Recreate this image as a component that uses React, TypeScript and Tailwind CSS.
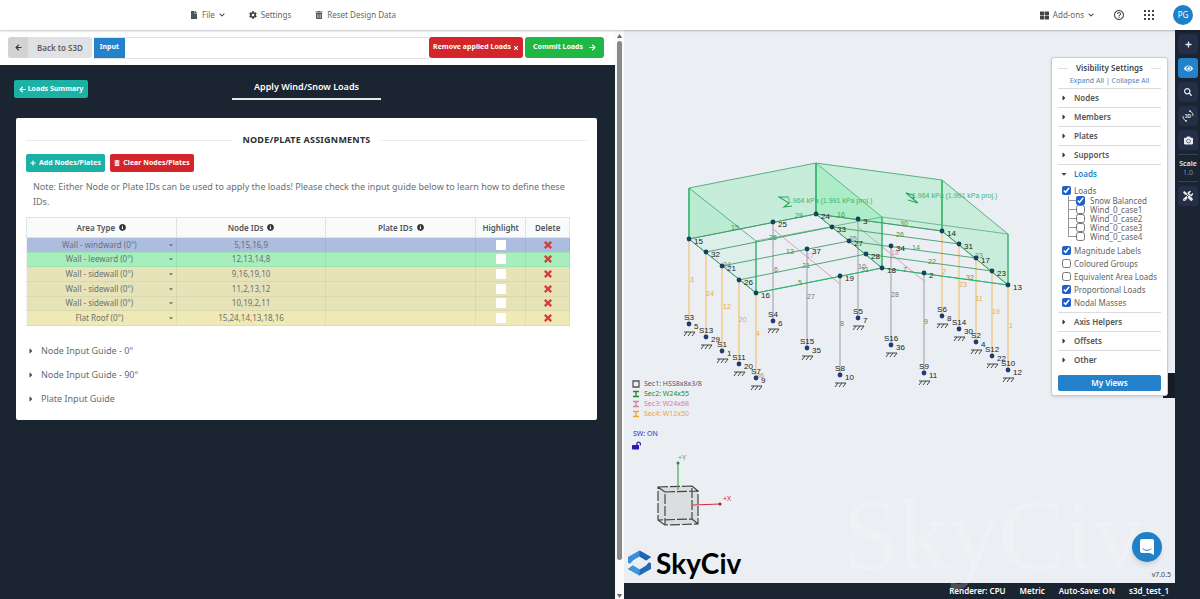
import { useState } from 'react';
import {
  FaArrowLeft, FaArrowRight, FaCamera, FaCaretDown, FaCaretRight, FaChevronDown, FaCog, FaEye, FaFile,
  FaInfoCircle, FaLockOpen, FaPlus, FaSearch, FaThLarge, FaTimes, FaTools, FaTrashAlt,
} from 'react-icons/fa';
import { MdHelpOutline } from 'react-icons/md';

const AREA_TYPES = ['Wall - windward (0°)', 'Wall - leeward (0°)', 'Wall - sidewall (0°)', 'Flat Roof (0°)'];

const ROWS = [
  { type: AREA_TYPES[0], nodes: '5,15,16,9', color: 'bg-[#adbde0]' },
  { type: AREA_TYPES[1], nodes: '12,13,14,8', color: 'bg-[#a6efbc]' },
  { type: AREA_TYPES[2], nodes: '9,16,19,10', color: 'bg-[#e7e3b9]' },
  { type: AREA_TYPES[2], nodes: '11,2,13,12', color: 'bg-[#e7e3b9]' },
  { type: AREA_TYPES[2], nodes: '10,19,2,11', color: 'bg-[#e7e3b9]' },
  { type: AREA_TYPES[3], nodes: '15,24,14,13,18,16', color: 'bg-[#efeab5]' },
];

const GUIDES = ['Node Input Guide - 0°', 'Node Input Guide - 90°', 'Plate Input Guide'];
const LOAD_CASES = ['Snow Balanced', 'Wind_0_case1', 'Wind_0_case2', 'Wind_0_case3', 'Wind_0_case4'];
const LOAD_OPTIONS = ['Magnitude Labels', 'Coloured Groups', 'Equivalent Area Loads', 'Proportional Loads', 'Nodal Masses'];

// roof nodes: [label, x, y]
const NODES: [string, number, number][] = [
  ['15', 689, 239], ['32', 706, 252], ['21', 722, 266], ['26', 739, 280], ['16', 756, 293],
  ['25', 773, 222], ['24', 816, 214], ['33', 832, 227], ['27', 849, 241], ['28', 866, 254], ['18', 882, 268],
  ['37', 807, 249], ['19', 840, 276], ['3', 858, 219], ['34', 891, 246], ['2', 924, 273],
  ['14', 942, 231], ['31', 959, 244], ['17', 976, 258], ['23', 992, 271], ['13', 1008, 285],
];

// supports: [support, node, x, y]
const SUPPORTS: [string, string, number, number][] = [
  ['S3', '5', 689, 324], ['S13', '29', 706, 337], ['S1', '1', 722, 351], ['S11', '20', 739, 364], ['S7', '9', 756, 378],
  ['S4', '6', 773, 321], ['S15', '35', 807, 348], ['S8', '10', 840, 375], ['S5', '7', 858, 318], ['S16', '36', 891, 345],
  ['S9', '11', 924, 373], ['S6', '8', 942, 316], ['S14', '30', 959, 329], ['S2', '4', 976, 342], ['S12', '22', 992, 356], ['S10', '12', 1008, 370],
];

const BEAMS = [
  'M689 239L816 214L942 231', 'M706 252L832 227L959 244', 'M722 266L849 241L976 258',
  'M739 280L866 254L992 271', 'M756 293L882 268L1008 285', 'M689 239L756 293', 'M816 214L882 268', 'M942 231L1008 285',
];

const LOAD_FACES: [string, number][] = [
  ['M689 188L816 163V214L689 239Z', 0.24], ['M689 188L756 241V293L689 239Z', 0.08], ['M816 163L882 217V268L816 214Z', 0.22],
  ['M816 163L942 180V231L816 214Z', 0.22], ['M942 180L1008 234V285L942 231Z', 0.22],
];

const MEMBER_LABELS: [string, number, number, string][] = [
  ['15', 735, 230, '#3f9a4c'], ['25', 773, 240, '#3f9a4c'], ['29', 799, 218, '#3f9a4c'], ['16', 841, 217, '#3f9a4c'],
  ['30', 904, 226, '#3f9a4c'], ['26', 900, 237, '#3f9a4c'], ['14', 916, 250, '#3f9a4c'], ['22', 932, 264, '#3f9a4c'],
  ['32', 970, 280, '#3f9a4c'], ['13', 790, 254, '#3f9a4c'], ['21', 806, 268, '#3f9a4c'], ['5', 800, 285, '#3f9a4c'],
  ['34', 727, 267, '#7c8a84'], ['35', 853, 241, '#7c8a84'], ['33', 979, 258, '#7c8a84'], ['31', 865, 272, '#3f9a4c'],
  ['10', 862, 269, '#777'], ['7', 905, 272, '#777'], ['6', 776, 272, '#777'], ['27', 811, 299, '#777'], ['28', 895, 297, '#777'],
  ['8', 842, 326, '#777'], ['9', 926, 324, '#777'], ['36', 760, 378, '#999'], ['17', 810, 258, '#cf93a8'], ['18', 895, 255, '#cf93a8'],
  ['3', 692, 282, '#e9a93f'], ['24', 710, 296, '#e9a93f'], ['12', 727, 309, '#e9a93f'], ['20', 743, 322, '#e9a93f'], ['4', 758, 336, '#e9a93f'],
  ['2', 944, 274, '#e9a93f'], ['23', 963, 287, '#e9a93f'], ['11', 979, 301, '#e9a93f'], ['19', 996, 314, '#e9a93f'], ['1', 1011, 328, '#e9a93f'],
];

const SECTIONS = [
  { label: 'Sec1: HSS8x8x3/8', color: 'text-[#555]', box: true },
  { label: 'Sec2: W24x55', color: 'text-[#238a2c]', box: false },
  { label: 'Sec3: W24x68', color: 'text-[#d37f98]', box: false },
  { label: 'Sec4: W12x50', color: 'text-[#eda52f]', box: false },
];

function TopBar() {
  return (
    <header className="relative z-20 flex h-[30px] shrink-0 items-center justify-between bg-white pr-[7px] pl-[190px] text-[8px] text-[#666] shadow-[0_1px_2px_rgba(0,0,0,0.25)]">
      <nav className="flex items-center gap-6">
        <button className="flex items-center gap-1"><FaFile className="h-2 w-2 text-[#4d5656]" />File<FaChevronDown className="h-[6px] w-[6px] text-[#444]" /></button>
        <button className="flex items-center gap-1"><FaCog className="h-2 w-2 text-[#444]" />Settings</button>
        <button className="flex items-center gap-1"><FaTrashAlt className="h-2 w-2 text-[#555]" />Reset Design Data</button>
      </nav>
      <div className="flex items-center gap-[19px]">
        <button className="flex items-center gap-1"><FaThLarge className="h-[9px] w-[9px] text-[#444]" />Add-ons<FaChevronDown className="h-[6px] w-[6px] text-[#444]" /></button>
        <button aria-label="Help"><MdHelpOutline className="h-3 w-3 text-[#444]" /></button>
        <button aria-label="Apps">
          <svg viewBox="0 0 10 10" className="h-[10px] w-[10px] fill-[#444]">
            {[0, 4, 8].map((y) => [0, 4, 8].map((x) => <rect key={`${x}-${y}`} x={x} y={y} width="2" height="2" />))}
          </svg>
        </button>
        <button className="h-5 w-5 rounded-full bg-[#1f80c8] text-[8px] text-white">PG</button>
      </div>
    </header>
  );
}

function Toolbar() {
  return (
    <div className="flex h-[35px] shrink-0 items-center bg-white pr-[11px] pl-2 text-[7px] font-bold whitespace-nowrap">
      <button className="flex h-[21px] overflow-hidden rounded-[3px] bg-[#e0e1e2] text-[8px] font-semibold text-[#5c5c5c]">
        <span className="flex h-full w-5 items-center justify-center bg-[#d2d3d4]"><FaArrowLeft className="h-[7px] w-[7px] text-[#333]" /></span>
        <span className="flex h-full w-16 items-center justify-center">Back to S3D</span>
      </button>
      <div className="ml-[2px] flex h-[22px] flex-1 border-y border-[#e0e0e0]">
        <button className="h-full w-[31px] bg-[#2382cb] text-white">Input</button>
      </div>
      <button className="flex h-[21px] w-[94px] items-center justify-center gap-[2px] rounded-[3px] bg-[#d4252a] text-white">Remove applied Loads <FaTimes className="h-[6px] w-[6px]" /></button>
      <button className="ml-[2px] flex h-[21px] w-[79px] items-center justify-center gap-[6px] rounded-[3px] bg-[#20b844] text-white">Commit Loads <FaArrowRight className="h-[7px] w-[7px]" /></button>
    </div>
  );
}

function AssignmentTable() {
  return (
    <table className="mt-2 h-[109px] w-[97%] table-fixed border-collapse border border-[#dfe4e4] text-center text-[8px] text-[#6a7173]">
      <thead className="bg-[#f9fbfb] text-[#4f5557]">
        <tr className="h-5">
          {['Area Type', 'Node IDs', 'Plate IDs'].map((h) => (
            <th key={h} className="border border-[#dfe4e4] p-0 font-semibold leading-3">
              <span className="inline-flex items-center gap-1">{h}<FaInfoCircle className="h-[7px] w-[7px] text-[#333]" /></span>
            </th>
          ))}
          <th className="w-[50px] border border-[#dfe4e4] p-0 font-semibold leading-3">Highlight</th>
          <th className="w-11 border border-[#dfe4e4] p-0 font-semibold leading-3">Delete</th>
        </tr>
      </thead>
      <tbody>
        {ROWS.map((row, i) => (
          <tr key={i} className={row.color}>
            <td className="border border-black/5 p-0">
              <div className="grid items-center">
                <select aria-label={`Area type ${i + 1}`} defaultValue={row.type} className="col-start-1 row-start-1 h-3 w-full appearance-none bg-transparent pr-1 text-center [text-align-last:center] leading-3">
                  {AREA_TYPES.map((t) => <option key={t}>{t}</option>)}
                </select>
                <FaCaretDown className="pointer-events-none col-start-1 row-start-1 mr-[2px] h-[6px] w-[6px] justify-self-end" />
              </div>
            </td>
            <td className="border border-black/5 p-0"><input aria-label={`Node IDs ${i + 1}`} defaultValue={row.nodes} className="block h-3 w-full bg-transparent text-center" /></td>
            <td className="border border-black/5 p-0"><input aria-label={`Plate IDs ${i + 1}`} className="block h-3 w-full bg-transparent text-center" /></td>
            <td className="border border-black/5 p-0"><input type="checkbox" aria-label={`Highlight ${i + 1}`} className="mx-auto block h-[10px] w-[10px] appearance-none rounded-[1px] bg-white checked:bg-[#2382cb]" /></td>
            <td className="border border-black/5 p-0"><button aria-label={`Delete ${i + 1}`} className="mx-auto block"><FaTimes className="h-[10px] w-[10px] stroke-[#cf3b36] stroke-[40] text-[#cf3b36]" /></button></td>
          </tr>
        ))}
      </tbody>
    </table>
  );
}

function LoadsPane() {
  return (
    <main className="flex-1 bg-[#1b2531] pt-[14px] pr-[18px] pl-4">
      <div className="relative flex justify-center">
        <button className="absolute top-[1px] -left-[2px] flex h-[18px] w-[74px] items-center justify-center gap-[2px] rounded-[2px] bg-[#1cb1a5] text-[7px] font-bold text-white"><FaArrowLeft className="h-[7px] w-[7px]" />Loads Summary</button>
        <h1 className="h-[21px] w-[149px] border-b-2 border-white/90 text-center text-[9px] leading-4 font-semibold text-white">Apply Wind/Snow Loads</h1>
      </div>
      <section className="mt-[18px] rounded-[2px] bg-white px-[10px] pt-[14px] pb-[9px]">
        <div className="flex items-center gap-[10px]">
          <hr className="flex-1 border-[#e9ebeb]" />
          <h2 className="text-[9px] leading-4 font-bold tracking-wide text-[#2c2f31]">NODE/PLATE ASSIGNMENTS</h2>
          <hr className="flex-1 border-[#e9ebeb]" />
        </div>
        <div className="mt-[6px] flex gap-[5px] text-[7px] font-bold text-white">
          <button className="flex h-[18px] w-[79px] items-center justify-center gap-[3px] rounded-[2px] bg-[#1cb1a5]"><FaPlus className="h-[6px] w-[6px]" />Add Nodes/Plates</button>
          <button className="flex h-[18px] w-[84px] items-center justify-center gap-[3px] rounded-[2px] bg-[#d4252a]"><FaTrashAlt className="h-[6px] w-[6px]" />Clear Nodes/Plates</button>
        </div>
        <p className="mt-[7px] pr-[10px] pl-[7px] text-[9px] leading-[15px] text-[#66707a]">
          Note: Either Node or Plate IDs can be used to apply the loads! Please check the input guide below to learn how to define these IDs.
        </p>
        <AssignmentTable />
        <div className="mt-[13px] text-[9px] text-[#666c70]">
          {GUIDES.map((g) => (
            <button key={g} className="flex h-6 w-full items-center gap-[6px] pl-[1px]"><FaCaretRight className="h-2 w-2 text-[#444]" />{g}</button>
          ))}
        </div>
      </section>
    </main>
  );
}

function ScrollTrack() {
  return (
    <div className="flex w-[9px] shrink-0 flex-col items-center bg-[#fafafa] pt-1 pb-[1px]">
      <svg viewBox="0 0 5 4" className="h-1 w-[5px] fill-[#666]"><path d="M0 4L2.500 0L5 4Z" /></svg>
      <div className="mt-[3px] w-[5px] flex-1 rounded-full bg-[#8a8a8a]" />
      <svg viewBox="0 0 5 4" className="mt-[34px] h-1 w-[5px] fill-[#666]"><path d="M0 0L2.500 4L5 0Z" /></svg>
    </div>
  );
}

function Model() {
  return (
    <svg viewBox="624 30 551 553" className="h-full w-full" style={{ fontFamily: '"Liberation Sans", Arial, sans-serif' }} fontSize="8">
      {SUPPORTS.map(([s, , x, y]) => {
        const top = NODES.find((n) => n[1] === x);
        const orange = x < 760 || x > 930;
        return <path key={s} d={`M${x} ${top ? top[2] : y}V${y}`} stroke={orange ? '#f2c67c' : '#999da0'} strokeWidth={orange ? 1.3 : 1} />;
      })}
      <path d="M773 229L840 284M858 227L924 281" stroke="#cfa3b2" strokeWidth="1" />
      {LOAD_FACES.map(([d, o]) => <path key={d} d={d} fill="#4de78a" fillOpacity={o} stroke="#4aa877" strokeWidth="0.9" />)}
      <path d="M756 241L882 217L1008 234" fill="none" stroke="#62b389" strokeWidth="0.9" />
      <path d="M689 188V239M756 241V293M816 163V214M882 217V268M942 180V231M1008 234V285" stroke="#30bd6b" strokeWidth="1.100" />
      {BEAMS.map((d) => <path key={d} d={d} fill="none" stroke="#419c67" strokeWidth="0.9" />)}
      <path d="M756 293L882 268L1008 285" fill="none" stroke="#25b873" strokeWidth="0.9" />
      <g fill="none" stroke="#25a85a" strokeWidth="1.100">
        <path d="M789 197H779L789 203L784 207L792 206" />
        <path d="M914 200L913 195L906 193L918 203L908 200" />
      </g>
      <g fill="#3fb56b" fontSize="7">
        <text x="787" y="203">1.964 kPa (1.991 kPa proj.)</text>
        <text x="912" y="198">1.964 kPa (1.991 kPa proj.)</text>
      </g>
      {MEMBER_LABELS.map(([t, x, y, fill], i) => <text key={i} x={x} y={y} fill={fill} textAnchor="middle" fontSize="7">{t}</text>)}
      {NODES.map(([t, x, y]) => (
        <g key={t}>
          <circle cx={x} cy={y} r="2.400" fill="#17415c" />
          <text x={x + 5} y={y + 5} fill="#222">{t}</text>
        </g>
      ))}
      {SUPPORTS.map(([s, t, x, y]) => (
        <g key={s}>
          <circle cx={x} cy={y} r="2.400" fill="#223a78" />
          <text x={x} y={y - 4} fill="#222" textAnchor="middle">{s}</text>
          <text x={x + 5} y={y + 5} fill="#222">{t}</text>
          <path d={`M${x - 5} ${y + 8}H${x + 6}M${x - 2} ${y + 8}L${x - 5} ${y + 12}M${x + 2} ${y + 8}L${x - 1} ${y + 12}M${x + 6} ${y + 8}L${x + 3} ${y + 12}`} stroke="#333" strokeWidth="0.9" />
        </g>
      ))}
    </svg>
  );
}

function CanvasCorner() {
  return (
    <div className="absolute bottom-[2px] left-1">
      <ul className="pl-1 text-[7px] leading-[10px]">
        {SECTIONS.map((s) => (
          <li key={s.label} className={`flex h-[10px] items-center gap-1 ${s.color}`}>
            <svg viewBox="0 0 8 8" className="h-2 w-2 fill-none stroke-current stroke-[1.3]"><path d={s.box ? 'M1 1H7V7H1Z' : 'M1 1.500H7M1 6.500H7M4 1.500V6.500'} /></svg>
            {s.label}
          </li>
        ))}
      </ul>
      <div className="mt-[10px] pl-[5px] text-[7px] leading-[10px] text-[#3a26c0]">SW: ON</div>
      <FaLockOpen className="mt-[2px] ml-1 h-[9px] w-[9px] text-[#2d16b8]" />
      <svg viewBox="650 450 90 78" className="ml-[22px] h-[78px] w-[90px]" fontSize="7">
        <path d="M658 487L692 486V519L658 520Z M665 492L698 491V524L665 525Z" fill="#d4d6d8" fillOpacity="0.7" />
        <path d="M658 487L692 486V519L658 520Z M665 492L698 491V524L665 525Z M658 487L665 492M692 486L698 491M692 519L698 524M658 520L665 525" fill="none" stroke="#444" strokeWidth="1.200" strokeDasharray="10 2" />
        <path d="M678 490V463" stroke="#4ca64c" strokeWidth="1.200" />
        <circle cx="678" cy="463" r="1.500" fill="#3f7a3f" />
        <path d="M693 505L720 504" stroke="#d42a3a" strokeWidth="1.200" />
        <circle cx="720" cy="504" r="1.500" fill="#8a2430" />
        <text x="678" y="460" fill="#4ca64c" className="font-['Noto_Sans',sans-serif]">+Y</text>
        <text x="723" y="501" fill="#d42a3a" className="font-['Noto_Sans',sans-serif]">+X</text>
      </svg>
      <div className="mt-[17px] flex h-9 items-center gap-[5px]">
        <svg viewBox="0 0 66 74" className="h-[26px] w-[23px]">
          <path d="M0 36V20L33 1L66 20L52 30L33 18L15 29L6 39Z" fill="#3a8fdb" />
          <path d="M33 1L66 20L52 30L33 18Z" fill="#2264b4" />
          <path d="M66 38V54L33 73L0 54L14 44L33 56L51 45L60 35Z" fill="#2468b8" />
          <path d="M33 73L0 54L14 44L33 56Z" fill="#3f97e0" />
        </svg>
        <span className="font-[Lato,sans-serif] text-[28px] leading-9 font-bold text-black">SkyCiv</span>
      </div>
    </div>
  );
}

function SettingsRow({ label, open }: { label: string; open?: boolean }) {
  return (
    <button className={`flex h-[19px] w-full items-center gap-[7px] border-t border-[#dcdcdc] pl-[3px] text-[8px] font-semibold ${open ? 'text-[#2382cb]' : 'text-[#555]'}`}>
      {open ? <FaCaretDown className="h-2 w-[6px] text-[#444]" /> : <FaCaretRight className="h-2 w-[6px] text-[#333]" />}
      {label}
    </button>
  );
}

function VisibilityPanel() {
  const [checked, setChecked] = useState<string[]>(['Loads', 'Snow Balanced', 'Magnitude Labels', 'Proportional Loads', 'Nodal Masses']);
  const box = (name: string) => (
    <input type="checkbox" className="h-[9px] w-[9px] shrink-0 accent-[#1f5fc9]" checked={checked.includes(name)}
      onChange={() => setChecked(checked.includes(name) ? checked.filter((c) => c !== name) : [...checked, name])} />
  );

  return (
    <aside className="absolute top-[27px] right-[7px] w-[117px] rounded-[3px] border border-[#ccc] bg-white px-[6px] pt-[3px] pb-1 text-[8px] text-[#666] shadow">
      <div className="flex items-center gap-2">
        <hr className="flex-1 border-[#e0e0e0]" />
        <h2 className="text-[8px] leading-[14px] font-semibold text-[#444]">Visibility Settings</h2>
        <hr className="flex-1 border-[#e0e0e0]" />
      </div>
      <div className="pb-[2px] text-center text-[7px] leading-[11px] text-[#3f86bd]"><a href="#expand">Expand All</a> | <a href="#collapse">Collapse All</a></div>
      {['Nodes', 'Members', 'Plates', 'Supports'].map((l) => <SettingsRow key={l} label={l} />)}
      <SettingsRow label="Loads" open />
      <div className="pt-[2px] pb-[3px] pl-[4px]">
        <label className="flex h-[11px] items-center gap-[3px]">{box('Loads')}Loads</label>
        <ul className="mb-[3px] pl-[6px]">
          {LOAD_CASES.map((c, i) => (
            <li key={c} className="flex h-[9px]">
              <span className={`w-px bg-[#999] ${i === 4 ? 'h-[5px]' : 'h-full'}`} />
              <span className="mt-1 h-px w-[7px] bg-[#999]" />
              <label className="flex items-center gap-[5px] leading-[9px]">{box(c)}{c}</label>
            </li>
          ))}
        </ul>
        {LOAD_OPTIONS.map((o) => <label key={o} className="flex h-[13px] items-center gap-[3px] whitespace-nowrap">{box(o)}{o}</label>)}
      </div>
      {['Axis Helpers', 'Offsets', 'Other'].map((l) => <SettingsRow key={l} label={l} />)}
      <button className="mt-[6px] block h-4 w-full rounded-[2px] bg-[#2382cb] text-[8px] font-semibold text-white">My Views</button>
    </aside>
  );
}

function Viewport() {
  return (
    <section className="relative flex min-w-0 flex-1 flex-col">
      <div className="relative min-h-0 flex-1 bg-[#ebeff3]">
        <Model />
        <CanvasCorner />
        <span className="absolute right-1 bottom-[3px] text-[7px] leading-[10px] text-[#444]">v7.0.5</span>
        <div className="absolute top-[343px] right-0 h-[25px] w-3 bg-[#151c26]" />
      </div>
      <footer className="flex h-4 items-center justify-end gap-[14px] bg-[#1b2531] pr-[6px] text-[8px] leading-3 font-semibold text-white">
        <span>Renderer: CPU</span><span>Metric</span><span>Auto-Save: ON</span><span>s3d_test_1</span>
      </footer>
      <div aria-hidden="true" className="pointer-events-none absolute right-8 bottom-[14px] font-['Liberation_Serif',serif] text-[100px] leading-none text-white/20">SkyCiv</div>
      <button aria-label="Open chat" className="absolute right-[13px] bottom-[37px] flex h-[30px] w-[30px] items-center justify-center rounded-full bg-[#1f80c8] shadow-md">
        <svg viewBox="0 0 14 16" className="h-4 w-[14px]">
          <path d="M2 0H12Q14 0 14 2V16L10 14H2Q0 14 0 12V2Q0 0 2 0Z" fill="#fff" />
          <path d="M3 10Q7 13 11 10" fill="none" stroke="#1f80c8" strokeWidth="1" strokeLinecap="round" />
        </svg>
      </button>
      <VisibilityPanel />
    </section>
  );
}

function SideRail() {
  const tile = 'flex h-5 w-full items-center justify-center rounded-[3px]';
  return (
    <nav className="flex w-[25px] shrink-0 flex-col gap-1 bg-[#1b2531] pt-1 pr-[2px] pl-[3px] text-white/90">
      <button aria-label="Add" className={`${tile} bg-[#242e47]`}><FaPlus className="h-[7px] w-[7px]" /></button>
      <button aria-label="Visibility" className={`${tile} bg-[#2382cb]`}><FaEye className="h-[9px] w-[9px]" /></button>
      <button aria-label="Search" className={`${tile} bg-[#242e47]`}><FaSearch className="h-2 w-2" /></button>
      <button aria-label="Rotate" className={`${tile} bg-[#242e47]`}>
        <svg viewBox="0 0 12 12" className="h-3 w-3 fill-none stroke-white/80">
          <path d="M1 6A5 5 0 0 0 5 11M7 1A5 5 0 0 1 11 6M7 1H9M5 11H3" />
          <text x="6" y="8" textAnchor="middle" className="fill-white/80 stroke-none text-[5px] font-bold">3D</text>
        </svg>
      </button>
      <button aria-label="Screenshot" className={`${tile} bg-[#242e47]`}><FaCamera className="h-[9px] w-[9px]" /></button>
      <div className="border-y border-[#36404e] py-1 text-center text-[7px] leading-[9px] font-semibold">Scale<div className="font-normal text-[#6b93bd]">1.0</div></div>
      <button aria-label="Tools" className={`${tile} bg-[#242e47]`}><FaTools className="h-[10px] w-[10px]" /></button>
    </nav>
  );
}

export default function App() {
  return (
    <div className="flex h-screen flex-col overflow-hidden bg-white font-['Noto_Sans',sans-serif] text-[8px]">
      <TopBar />
      <div className="flex min-h-0 flex-1">
        <div className="flex w-[52%] shrink-0">
          <div className="flex min-w-0 flex-1 flex-col">
            <Toolbar />
            <LoadsPane />
          </div>
          <ScrollTrack />
        </div>
        <Viewport />
        <SideRail />
      </div>
    </div>
  );
}
